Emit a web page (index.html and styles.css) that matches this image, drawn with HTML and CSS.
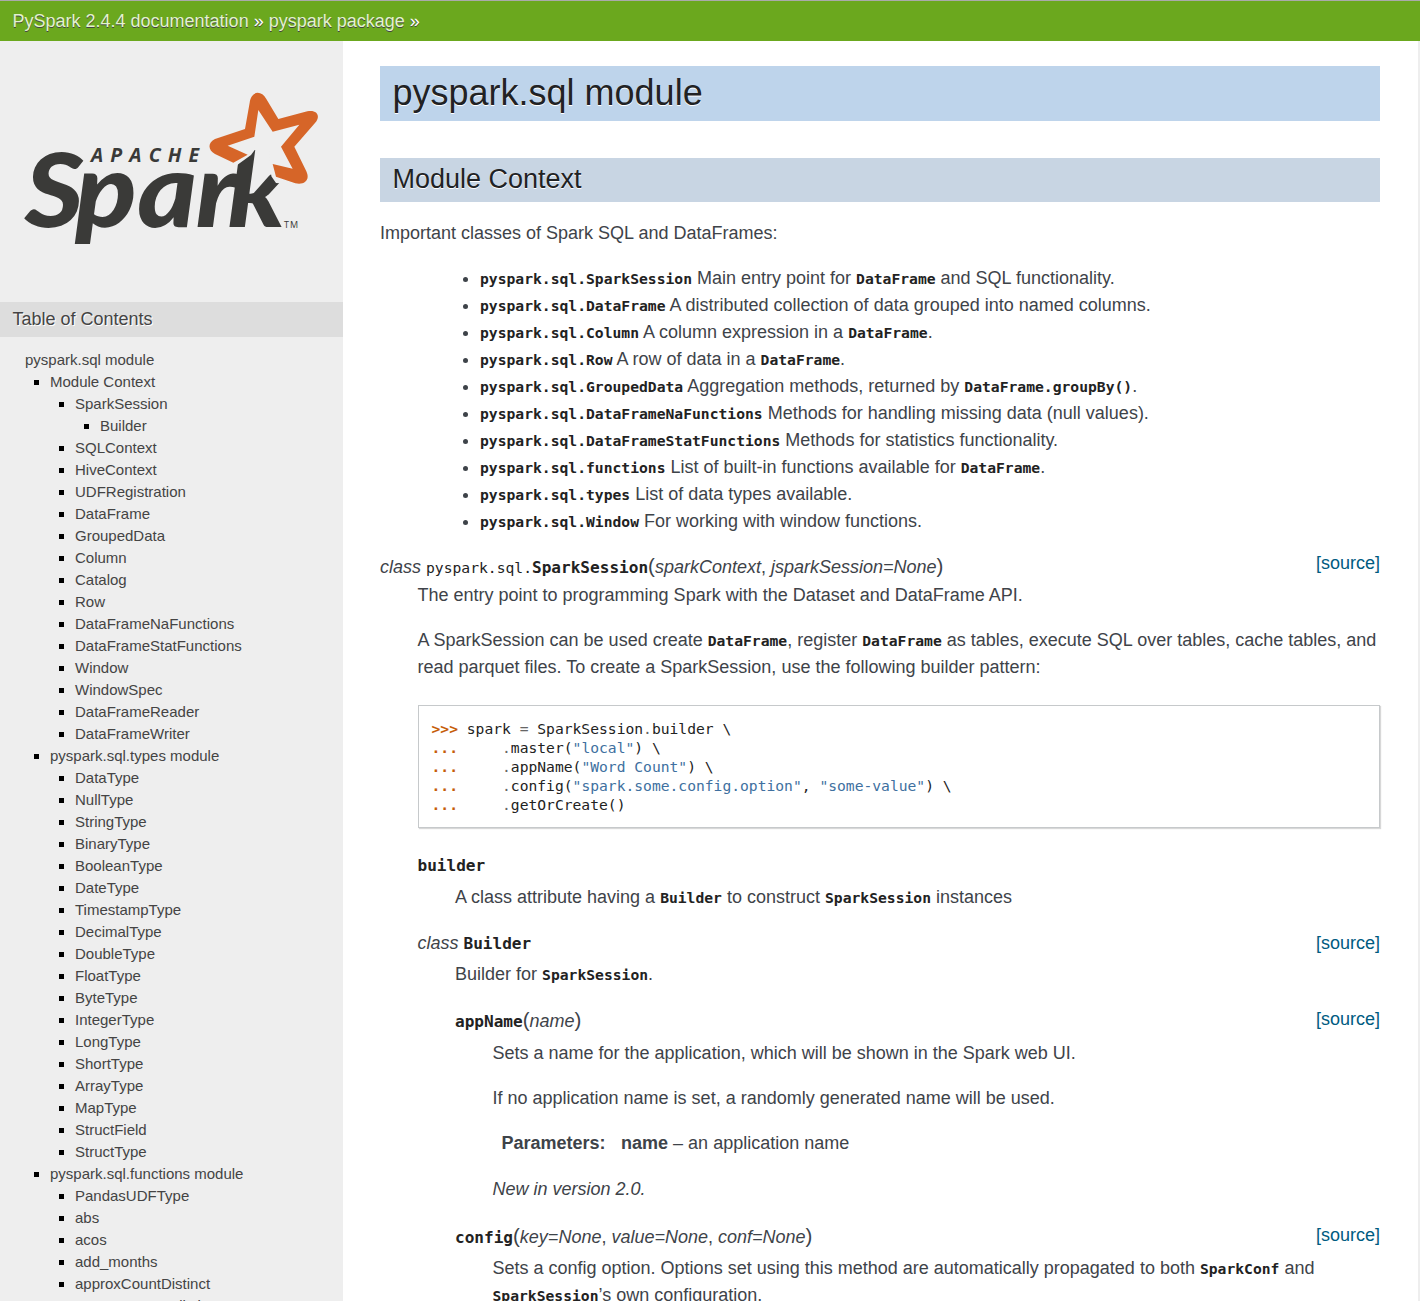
FILE: index.html
```html
<!DOCTYPE html>
<html lang="en">
<head>
<meta charset="utf-8">
<title>pyspark.sql module — PySpark 2.4.4 documentation</title>
<link rel="stylesheet" href="styles.css">
</head>
<body>
<nav class="related"><a>PySpark 2.4.4 documentation</a> » <a>pyspark package</a> »</nav>
<div class="document">
<aside class="sidebar">
<svg class="logo" width="343" height="261" viewBox="0 41 343 261" role="img" aria-label="Apache Spark">
<g class="wordmark">
<text class="apache" x="91" y="162" textLength="108">APACHE</text>
<text class="spark" y="227.500" x="22.500 68.500 125 178 207" transform="scale(1.1 1)">Spark</text>
<text class="tm" x="284" y="228" textLength="14">TM</text>
</g>
<path class="gap" d="M229 140 H262 L251 155 L236.500 165.500 L229 170 Z M270 150 L290 160 V184 L276 183 L271.500 176.500 L269 163.500 Z"/>
<path class="star" transform="translate(0 80) scale(.33333)" d="M700 248 L645 222 C622 210 624 186 645 177 L735 147 L749 68 C754 32 784 30 799 57 L835 117 L922 94 C952 88 963 109 945 129 L883 200 L919 274 C932 302 911 316 886 310 L828 290 L818 252 L878 266 L843 200 L898 134 L818 155 L775 90 L763 170 L683 197 L743 224 Z"/>
</svg>
<h3>Table of Contents</h3>
<ul class="toc">
<li class="root">pyspark.sql module</li>
<li>Module Context
<ul>
<li>SparkSession<ul><li>Builder</li></ul></li>
<li>SQLContext</li><li>HiveContext</li><li>UDFRegistration</li><li>DataFrame</li><li>GroupedData</li><li>Column</li><li>Catalog</li><li>Row</li><li>DataFrameNaFunctions</li><li>DataFrameStatFunctions</li><li>Window</li><li>WindowSpec</li><li>DataFrameReader</li><li>DataFrameWriter</li>
</ul></li>
<li>pyspark.sql.types module
<ul>
<li>DataType</li><li>NullType</li><li>StringType</li><li>BinaryType</li><li>BooleanType</li><li>DateType</li><li>TimestampType</li><li>DecimalType</li><li>DoubleType</li><li>FloatType</li><li>ByteType</li><li>IntegerType</li><li>LongType</li><li>ShortType</li><li>ArrayType</li><li>MapType</li><li>StructField</li><li>StructType</li>
</ul></li>
<li>pyspark.sql.functions module
<ul>
<li>PandasUDFType</li><li>abs</li><li>acos</li><li>add_months</li><li>approxCountDistinct</li><li>approx_count_distinct</li>
</ul></li>
</ul>
</aside>
<main class="body">
<h1>pyspark.sql module</h1>
<h2>Module Context</h2>
<p class="intro">Important classes of Spark SQL and DataFrames:</p>
<ul class="classes">
<li><code>pyspark.sql.SparkSession</code> Main entry point for <code>DataFrame</code> and SQL functionality.</li>
<li><code>pyspark.sql.DataFrame</code> A distributed collection of data grouped into named columns.</li>
<li><code>pyspark.sql.Column</code> A column expression in a <code>DataFrame</code>.</li>
<li><code>pyspark.sql.Row</code> A row of data in a <code>DataFrame</code>.</li>
<li><code>pyspark.sql.GroupedData</code> Aggregation methods, returned by <code>DataFrame.groupBy()</code>.</li>
<li><code>pyspark.sql.DataFrameNaFunctions</code> Methods for handling missing data (null values).</li>
<li><code>pyspark.sql.DataFrameStatFunctions</code> Methods for statistics functionality.</li>
<li><code>pyspark.sql.functions</code> List of built-in functions available for <code>DataFrame</code>.</li>
<li><code>pyspark.sql.types</code> List of data types available.</li>
<li><code>pyspark.sql.Window</code> For working with window functions.</li>
</ul>
<dl class="session">
<dt><span><em>class </em><code class="prefix">pyspark.sql.</code><code class="name">SparkSession</code><span class="paren">(</span><em>sparkContext</em>, <em>jsparkSession=None</em><span class="paren">)</span></span><a class="source raised">[source]</a></dt>
<dd>
<p>The entry point to programming Spark with the Dataset and DataFrame API.</p>
<p class="next">A SparkSession can be used create <code>DataFrame</code>, register <code>DataFrame</code> as tables, execute SQL over tables, cache tables, and read parquet files. To create a SparkSession, use the following builder pattern:</p>
<pre><b>&gt;&gt;&gt; </b>spark <i>=</i> SparkSession<i>.</i>builder \
<b>... </b>    <i>.</i>master(<q>"local"</q>) \
<b>... </b>    <i>.</i>appName(<q>"Word Count"</q>) \
<b>... </b>    <i>.</i>config(<q>"spark.some.config.option"</q>, <q>"some-value"</q>) \
<b>... </b>    <i>.</i>getOrCreate()</pre>
<dl class="attribute">
<dt><span><code class="name">builder</code></span></dt>
<dd class="spaced"><p>A class attribute having a <code>Builder</code> to construct <code>SparkSession</code> instances</p></dd>
</dl>
<dl class="builder">
<dt><span><em>class </em><code class="name">Builder</code></span><a class="source">[source]</a></dt>
<dd class="middle">
<p>Builder for <code>SparkSession</code>.</p>
<dl class="method">
<dt><span><code class="name">appName</code><span class="paren">(</span><em>name</em><span class="paren">)</span></span><a class="source lifted">[source]</a></dt>
<dd class="spaced">
<p>Sets a name for the application, which will be shown in the Spark web UI.</p>
<p class="next">If no application name is set, a randomly generated name will be used.</p>
<div class="fields"><strong>Parameters:</strong><span><strong>name</strong> – an application name</span></div>
<p class="version"><em>New in version 2.0.</em></p>
</dd>
</dl>
<dl class="method second">
<dt><span><code class="name">config</code><span class="paren">(</span><em>key=None</em>, <em>value=None</em>, <em>conf=None</em><span class="paren">)</span></span><a class="source lifted">[source]</a></dt>
<dd class="middle"><p>Sets a config option. Options set using this method are automatically propagated to both <code>SparkConf</code> and <code>SparkSession</code>’s own configuration.</p></dd>
</dl>
</dd>
</dl>
</dd>
</dl>
</main>
</div>
</body>
</html>
```
FILE: styles.css
```css
* { box-sizing: border-box; }
html, body { margin: 0; height: 1301px; overflow: hidden; }
body { background: #eee; color: #3e4349; font: 18px/27px "Liberation Sans", Arial, sans-serif; }
p, ul, dl, dd, h1, h2, h3, pre { margin: 0; padding: 0; }
ul { list-style: none; }

.related { height: 41px; padding-left: 12.5px; border-top: 1px solid #aaa; background: #6ba81e; color: #fff; line-height: 41px; text-shadow: 0 1px 0 #444; }
.related a { color: #e2f3cc; }
.document { display: flex; height: 1260px; padding-right: 2px; }
.sidebar { flex: 0 0 343px; overflow: hidden; background: #eee; }
.body { flex: 1; padding: 25px 38px 0 37px; background: #fff; }

.logo { display: block; }
.wordmark { fill: #3a3a38; }
.apache { font: italic 700 19.5px "Open Sans", sans-serif; }
.spark { font: italic 900 103px Lato, sans-serif; }
.tm { font: 9px "Open Sans", sans-serif; }
.star { fill: #d66528; }
.gap { fill: #eee; }

h1, h2, h3 { font-weight: 400; }
.sidebar h3 { height: 35px; padding-left: 12.5px; background: #ddd; color: #444; font-size: 18px; line-height: 34px; text-shadow: 1px 1px 0 #fff; }
.toc { padding: 12px 0 0 50px; color: #444; font-size: 15px; line-height: 22px; }
.toc ul { padding-left: 25px; }
.toc li::before { content: ""; display: inline-block; width: 5px; height: 5px; margin: 0 11px 0 -16px; background: #000; vertical-align: 2px; }
.toc .root { margin-left: -25px; }
.toc .root::before { display: none; }

h1, h2 { padding-left: 12.5px; color: #212224; text-shadow: 0 1px 0 #fff; }
h1 { height: 55px; background: #bed4eb; font-size: 36px; line-height: 54px; }
h2 { height: 44px; margin-top: 37px; background: #c8d5e3; font-size: 27px; line-height: 42px; }
.intro { margin-top: 18px; }
.classes { margin-top: 18px; padding-left: 100px; }
.classes li::before { content: ""; display: inline-block; width: 5px; height: 5px; margin: 0 12px 0 -17px; border-radius: 50%; background: #3e4349; vertical-align: 2px; }

code, pre { font-family: "DejaVu Sans Mono", monospace; }
code { color: #222; font-size: 14.68px; font-weight: 700; line-height: 1; }
.prefix { font-weight: 400; }
.name { font-size: 16.07px; }
.paren { font-size: 20.5px; line-height: 1; }
dt { display: flex; justify-content: space-between; height: 27px; }
dd { padding-left: 37.5px; }
dd > p { margin-right: -2px; }
.source { color: #005b81; }
.raised { margin-top: -4px; }
.lifted { margin-top: -2px; }
.session { margin-top: 19px; }
.session > dd { padding-top: 1px; }
.next { margin-top: 18px; }
pre { height: 123px; margin-top: 24px; padding: 13px 13px 0; border: 1px solid #c6c9cb; background: #fff; box-shadow: 1px 1px 1px #d8d8d8; color: #222; font-size: 14.65px; line-height: 19px; }
pre b { color: #c65d09; }
pre i { color: #666; font-style: normal; }
pre q { color: #4070a0; quotes: none; }
.attribute { margin-top: 24px; }
dd.spaced { padding-top: 5px; }
dd.middle { padding-top: 4px; }
.builder { margin-top: 19px; }
.method { margin-top: 20px; }
.fields { display: flex; gap: 15.5px; margin-top: 18px; padding-left: 9px; }
.version { margin-top: 19px; }
.method.second { margin-top: 21px; }
```
